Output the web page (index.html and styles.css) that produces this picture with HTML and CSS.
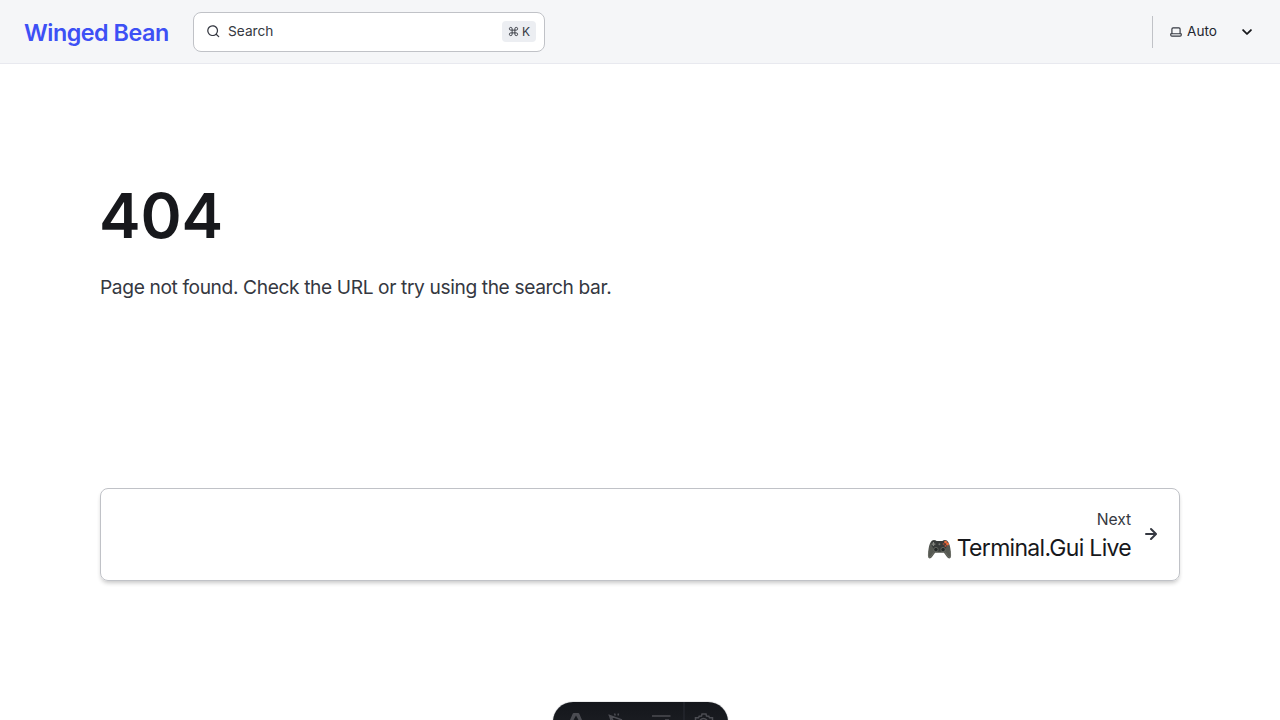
FILE: index.html
```html
<!DOCTYPE html>
<html lang="en">
<head>
<meta charset="utf-8">
<title>404 | Winged Bean</title>
<link rel="stylesheet" href="styles.css">
</head>
<body>
<header class="header">
  <a class="site-title">Winged Bean</a>
  <button class="search">
    <svg class="search-icon" viewBox="0 0 24 24" fill="currentColor"><path d="M21.71 20.29 18 16.61A9 9 0 1 0 16.61 18l3.68 3.68a.999.999 0 0 0 1.42 0 1 1 0 0 0 0-1.39ZM11 18a7 7 0 1 1 0-14 7 7 0 0 1 0 14Z"/></svg>
    <span class="search-label">Search</span>
    <kbd class="keys"><svg class="command" viewBox="0 0 24 24" fill="none" stroke="currentColor" stroke-width="2"><path d="M9 9V6a3 3 0 1 0-3 3h12a3 3 0 1 0-3-3v12a3 3 0 1 0 3-3H6a3 3 0 1 0 3 3Z"/></svg><span>K</span></kbd>
  </button>
  <div class="theme">
    <svg class="laptop" viewBox="0 0 24 24" fill="currentColor"><path d="M21 14h-1V7a3 3 0 0 0-3-3H7a3 3 0 0 0-3 3v7H3a1 1 0 0 0-1 1v2a3 3 0 0 0 3 3h14a3 3 0 0 0 3-3v-2a1 1 0 0 0-1-1ZM6 7a1 1 0 0 1 1-1h10a1 1 0 0 1 1 1v7H6V7Zm14 10a1 1 0 0 1-1 1H5a1 1 0 0 1-1-1v-1h16v1Z"/></svg>
    <span class="theme-label">Auto</span>
    <svg class="caret" viewBox="0 0 24 24" fill="currentColor"><path d="M17 9.17a1 1 0 0 0-1.41 0L12 12.71 8.46 9.17a1 1 0 1 0-1.41 1.42l4.24 4.24a1.002 1.002 0 0 0 1.42 0L17 10.59a1.002 1.002 0 0 0 0-1.42Z"/></svg>
  </div>
</header>
<main class="main">
  <h1 class="heading"><span>404</span></h1>
  <p class="tagline"><span>Page not found. Check the URL or try using the search bar.</span></p>
  <a class="next">
    <span class="next-text">
      <span class="next-label">Next</span>
      <span class="next-title">
        <svg class="gamepad" viewBox="0 0 26 20">
          <path d="M5 1.5Q6.5 0 9 .8l1 .9h6l1-.9q2.5-.8 4 .7 2.400 2 3.300 8 1.200 7.500.2 9.500-1.500 1.800-3.500-.3L17.600 14H8.400L5 18.700q-2 2.100-3.500.3-1-2 .2-9.500.9-6 3.300-8Z" fill="#555852"/>
          <path d="M5.500 1.600Q7 .7 9 1.800h8q2-1.100 3.500-.2l1.800 3-4.800 8H8.500l-4.800-8Z" fill="#373a39"/>
          <path d="M2 12q-1.100 5.500 0 6.500 1.200.8 3-2l2-3M24 12q1.100 5.500 0 6.500-1.200.8-3-2l-2-3" fill="none" stroke="#70736b" stroke-width=".8"/>
          <path d="M6.700 2.800v4M4.700 4.800h4" stroke="#858780" stroke-width="1.300"/>
          <circle cx="9.300" cy="10.600" r="2.300" fill="#252928" stroke="#777a73" stroke-width=".7"/>
          <circle cx="16.700" cy="10.600" r="2.300" fill="#252928" stroke="#777a73" stroke-width=".7"/>
          <circle cx="12.900" cy="5" r="1" fill="#737570"/>
          <circle cx="19.300" cy="2.800" r="1.500" fill="#f06c3c"/><circle cx="17.300" cy="4.800" r="1.100" fill="#8f4d3a"/><circle cx="21.300" cy="4.800" r="1.500" fill="#f06c3c"/><circle cx="19.300" cy="6.800" r="1.100" fill="#a94e38"/>
        </svg>
        <span class="next-name">Terminal.Gui Live</span>
      </span>
    </span>
    <svg class="arrow" viewBox="0 0 24 24" fill="currentColor"><path d="M17.920 11.620a1.001 1.001 0 0 0-.21-.33l-5-5a1.003 1.003 0 1 0-1.420 1.420l3.300 3.290H7a1 1 0 0 0 0 2h7.590l-3.300 3.290a1.002 1.002 0 0 0 .325 1.639 1 1 0 0 0 1.095-.219l5-5a1 1 0 0 0 .21-.33 1 1 0 0 0 0-.76Z"/></svg>
  </a>
</main>
<div class="toolbar">
  <svg class="tools" viewBox="0 0 174 18" fill="none" stroke="#4b4c52" stroke-width="1.500">
    <path d="M17 18l2.800-6.500q.3-.5.900-.5h4.600q.6 0 .9.500L29 18h-3.500L23 13.500 20.500 18Z" fill="#4b4c52" stroke="none"/>
    <path d="M58 18l-1.500-4.500L69 18M56 13l4 5M61.500 11.500l.8 2M65.500 11.500l-.5 2"/>
    <path d="M99 14h18.500M112 18h4"/>
    <path d="M131 0v18" stroke="#2b2d34" stroke-width="1"/>
    <path d="M142.500 18v-2.200h3l.7-1.500 2.300-.3.500-2h4l.5 2 2.300.3.700 1.500h3V18M147 18q3.500-3 7 0"/>
  </svg>
</div>
</body>
</html>
```
FILE: styles.css
```css
* { box-sizing: border-box; }
body { margin: 0; height: 720px; overflow: hidden; position: relative; background: #fff; color: #17181c; font-family: Inter, sans-serif; }
svg { display: block; flex: none; }
.header { height: 64px; padding: 0 24px; display: flex; align-items: center; background: #f5f6f8; border-bottom: 1px solid #e8e9ef; }
.site-title { width: 145px; margin-right: 24px; padding-top: 2px; white-space: nowrap; color: #3d50f5; font-size: 23.3px; font-weight: 600; line-height: 32px; letter-spacing: -.47px; }
.search { width: 352px; height: 40px; display: flex; align-items: center; padding: 0 8px 0 12px; background: #fff; border: 1px solid #c0c2c7; border-radius: 8px; color: #353841; font: 13.7px Inter, sans-serif; }
.search-icon { width: 14.5px; height: 14.5px; margin-right: 7.5px; }
.search-label { padding-bottom: 2px; }
.keys { margin-left: auto; width: 34px; height: 21px; display: flex; align-items: center; justify-content: center; gap: 3px; border-radius: 4px; background: #eceef2; font: 12px Inter, sans-serif; }
.command { width: 11px; height: 11px; }
.theme { margin-left: auto; height: 32px; width: 104px; padding-left: 16px; display: flex; align-items: center; border-left: 1px solid #c0c2c7; font-size: 13.6px; color: #353841; }
.laptop { width: 14px; height: 14px; margin-right: 4px; }
.theme-label { flex: none; width: 48px; padding-bottom: 2px; color: #23262f; }
.caret { width: 22px; height: 22px; margin-left: 1px; color: #17181c; }
.main { width: 1080px; margin: 0 auto; padding-top: 112px; }
.heading { margin: 0; font-size: 62.5px; line-height: 79px; font-weight: 600; letter-spacing: -.2px; text-indent: -1px; }
.tagline { margin: 14px 0 0; font-size: 19.2px; line-height: 36px; color: #353841; letter-spacing: -.39px; }
.next { margin-top: 183px; height: 93px; display: flex; justify-content: flex-end; align-items: center; gap: 8px; padding: 0 16px 2px 0; border: 1px solid #c0c2c7; border-radius: 8px; box-shadow: 0 3px 4px -1px rgba(0,0,0,.22); }
.next-text { display: flex; flex-direction: column; align-items: flex-end; padding-top: 2px; color: #353841; }
.next-label { font-size: 15.7px; line-height: 28px; letter-spacing: -.1px; }
.next-title { display: flex; align-items: center; gap: 5px; font-size: 23px; line-height: 29px; color: #17181c; letter-spacing: -.7px; }
.gamepad { width: 25px; height: 20px; }
.arrow { width: 24px; height: 24px; color: #353841; }
.toolbar { position: absolute; left: 553px; top: 702px; width: 175px; height: 40px; border-radius: 20px 20px 0 0; background: linear-gradient(#14161b, #202227); overflow: hidden; box-shadow: 0 0 1px #343841; }
.tools { width: 174px; height: 18px; }
```
